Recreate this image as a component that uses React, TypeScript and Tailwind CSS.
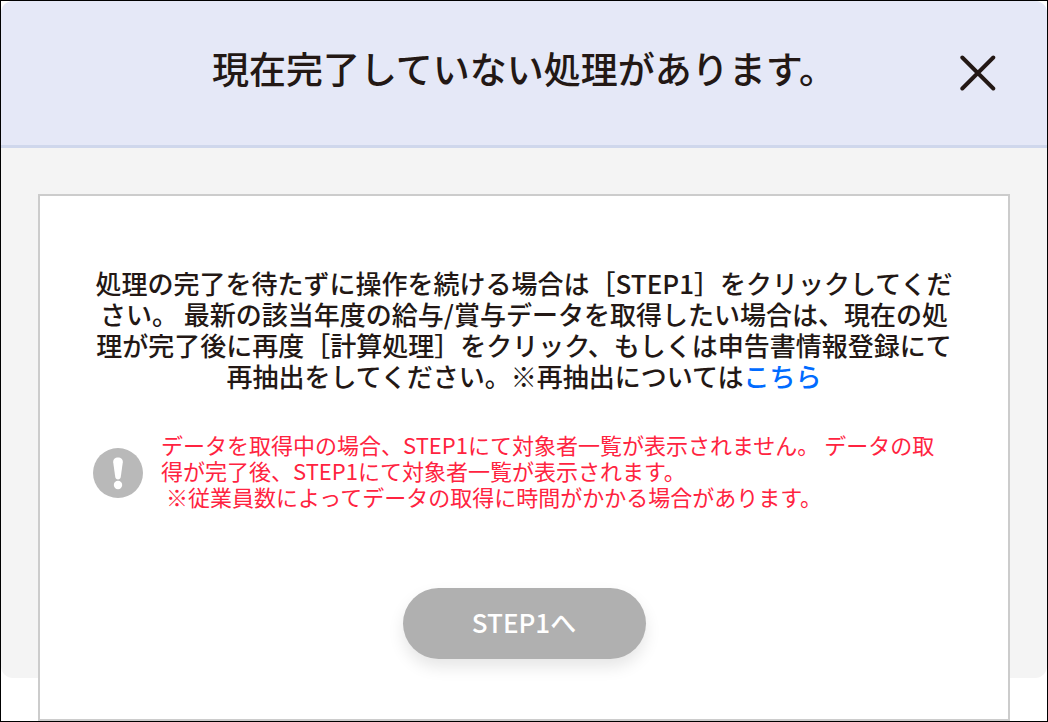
type DialogHeaderProps = {
  title: string
}

function CloseIcon() {
  return (
    <svg viewBox="0 0 36 36" className="size-9" fill="none" aria-hidden="true">
      <path d="M2.3 2.5L33.3 33.5M33.3 2.5L2.3 33.5" stroke="currentColor" strokeWidth="3.9" strokeLinecap="round" />
    </svg>
  )
}

function AlertIcon() {
  return (
    <svg viewBox="0 0 50 50" className="mt-[17px] size-[50px] shrink-0" aria-hidden="true">
      <circle cx="25" cy="25" r="25" fill="#b9b9b9" />
      <path d="M20.2 14.2C20 11.4 22 9.6 25 9.6S30 11.4 29.8 14.2L27.8 28.8C27.5 30.6 26.500 31.500 25 31.500S22.500 30.600 22.200 28.800Z" fill="#fff" />
      <circle cx="25" cy="37" r="4.2" fill="#fff" />
    </svg>
  )
}

function DialogHeader({ title }: DialogHeaderProps) {
  return (
    <header className="relative flex h-[147px] items-center justify-center rounded-t-xl border-b-3 border-[#cfd7ec] bg-[#e5e8f7] px-24 pb-2.5">
      <h1 className="text-center text-[37px] font-medium leading-[54px]">{title}</h1>
      <button type="button" aria-label="閉じる" className="absolute top-[54px] right-[51px] cursor-pointer">
        <CloseIcon />
      </button>
    </header>
  )
}

export default function App() {
  return (
    <div className="min-h-screen border border-black bg-white font-['Noto_Sans_CJK_JP',sans-serif] text-[#231815]">
      <section role="dialog" className="flex flex-col rounded-xl bg-[#f4f4f4]">
        <DialogHeader title="現在完了していない処理があります。" />

        {/* The card runs past the bottom of the grey panel */}
        <div className="mt-[46px] mx-[37px] -mb-[43px] flex flex-col items-center border-2 border-[#cccccc] bg-white px-[53px] pt-[71px] pb-[60px]">
          <p className="text-center text-[26px] font-medium leading-[31px]">
            処理の完了を待たずに操作を続ける場合は［STEP1］をクリックしてください。 最新の該当年度の給与/賞与データを取得したい場合は、現在の処理が完了後に再度［計算処理］をクリック、もしくは申告書情報登録にて再抽出をしてください。※再抽出については
            <a href="#" className="text-[#006bff]">こちら</a>
          </p>

          {/* Notice */}
          <div className="mt-10 flex w-full items-start gap-[18px]">
            <AlertIcon />
            <p className="text-[22px] leading-[26px] text-[#ff2340]">
              データを取得中の場合、STEP1にて対象者一覧が表示されません。 データの取得が完了後、STEP1にて対象者一覧が表示されます。
              <br />
              &nbsp;※従業員数によってデータの取得に時間がかかる場合があります。
            </p>
          </div>

          <button
            type="button"
            className="mt-[79px] h-[71px] w-[243px] cursor-pointer rounded-full bg-[#b0b0b0] pb-1 text-[26px] font-medium text-white shadow-[0_8px_16px_rgba(0,0,0,0.1)]"
          >
            STEP1へ
          </button>
        </div>
      </section>
    </div>
  )
}
